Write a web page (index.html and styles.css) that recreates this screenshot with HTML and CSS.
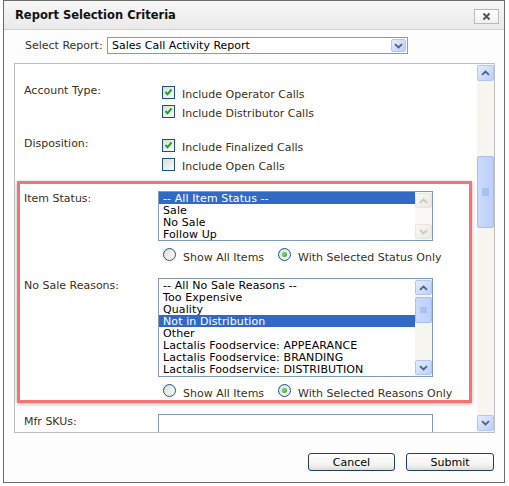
FILE: index.html
```html
<!DOCTYPE html>
<html lang="en">
<head>
    <meta charset="UTF-8">
    <title>Report Selection Criteria</title>
    <link rel="stylesheet" href="styles.css">
</head>
<body>
    <div class="dialog">
        <div class="dialog-header">
            <span class="dialog-title">Report Selection Criteria</span>
            <button class="close-btn" type="button">
                <svg width="9" height="9" viewBox="0 0 9 9"><path d="M1.5 1.5 L7.5 7.5 M7.5 1.5 L1.5 7.5" stroke="#555" stroke-width="2"/></svg>
            </button>
        </div>

        <div class="dialog-body">
            <div class="report-row">
                <label class="report-label">Select Report:</label>
                <div class="select">
                    <span>Sales Call Activity Report</span>
                    <span class="select-arrow">
                        <svg width="9" height="6" viewBox="0 0 9 6"><path d="M1 1.2 L4.5 4.5 L8 1.2" fill="none" stroke="#4d6185" stroke-width="1.8"/></svg>
                    </span>
                </div>
            </div>

            <div class="panel">
                <div class="panel-content">
                    <div class="field">
                        <div class="field-label">Account Type:</div>
                        <div class="checks">
                            <div class="check-row">
                                <span class="checkbox"><svg width="11" height="11" viewBox="0 0 11 11"><path d="M2.5 5 L4.5 7.3 L8.5 2.5" fill="none" stroke="#21a121" stroke-width="2"/></svg></span>
                                <span class="check-text">Include Operator Calls</span>
                            </div>
                            <div class="check-row">
                                <span class="checkbox"><svg width="11" height="11" viewBox="0 0 11 11"><path d="M2.5 5 L4.5 7.3 L8.5 2.5" fill="none" stroke="#21a121" stroke-width="2"/></svg></span>
                                <span class="check-text">Include Distributor Calls</span>
                            </div>
                        </div>
                    </div>

                    <div class="field field-gap">
                        <div class="field-label">Disposition:</div>
                        <div class="checks">
                            <div class="check-row">
                                <span class="checkbox"><svg width="11" height="11" viewBox="0 0 11 11"><path d="M2.5 5 L4.5 7.3 L8.5 2.5" fill="none" stroke="#21a121" stroke-width="2"/></svg></span>
                                <span class="check-text">Include Finalized Calls</span>
                            </div>
                            <div class="check-row">
                                <span class="checkbox"></span>
                                <span class="check-text">Include Open Calls</span>
                            </div>
                        </div>
                    </div>

                    <div class="highlight">
                        <div class="field">
                            <div class="field-label list-label">Item Status:</div>
                            <div>
                                <div class="listbox listbox-short">
                                    <div class="listbox-items">
                                        <div class="option selected">-- All Item Status --</div>
                                        <div class="option">Sale</div>
                                        <div class="option">No Sale</div>
                                        <div class="option">Follow Up</div>
                                    </div>
                                    <div class="lb-scroll disabled">
                                        <div class="sb-btn"><svg width="9" height="6" viewBox="0 0 9 6"><path d="M1 4.8 L4.5 1.5 L8 4.8" fill="none" stroke="#cac8bb" stroke-width="1.8"/></svg></div>
                                        <div class="sb-track"></div>
                                        <div class="sb-btn"><svg width="9" height="6" viewBox="0 0 9 6"><path d="M1 1.2 L4.5 4.5 L8 1.2" fill="none" stroke="#cac8bb" stroke-width="1.8"/></svg></div>
                                    </div>
                                </div>
                                <div class="radio-row">
                                    <span class="radio"></span>
                                    <span class="radio-text">Show All Items</span>
                                    <span class="radio checked radio-second"><span class="dot"></span></span>
                                    <span class="radio-text">With Selected Status Only</span>
                                </div>
                            </div>
                        </div>

                        <div class="field field-list-gap">
                            <div class="field-label list-label">No Sale Reasons:</div>
                            <div>
                                <div class="listbox listbox-tall">
                                    <div class="listbox-items">
                                        <div class="option">-- All No Sale Reasons --</div>
                                        <div class="option">Too Expensive</div>
                                        <div class="option">Quality</div>
                                        <div class="option selected">Not in Distribution</div>
                                        <div class="option">Other</div>
                                        <div class="option">Lactalis Foodservice: APPEARANCE</div>
                                        <div class="option">Lactalis Foodservice: BRANDING</div>
                                        <div class="option">Lactalis Foodservice: DISTRIBUTION</div>
                                    </div>
                                    <div class="lb-scroll">
                                        <div class="sb-btn"><svg width="9" height="6" viewBox="0 0 9 6"><path d="M1 4.8 L4.5 1.5 L8 4.8" fill="none" stroke="#4d6185" stroke-width="1.8"/></svg></div>
                                        <div class="sb-track"><div class="sb-thumb lb-thumb"><svg width="7" height="7" viewBox="0 0 7 7"><path d="M0 1h7M0 3h7M0 5h7" stroke="#8eaae8" stroke-width="1"/></svg></div></div>
                                        <div class="sb-btn"><svg width="9" height="6" viewBox="0 0 9 6"><path d="M1 1.2 L4.5 4.5 L8 1.2" fill="none" stroke="#4d6185" stroke-width="1.8"/></svg></div>
                                    </div>
                                </div>
                                <div class="radio-row">
                                    <span class="radio"></span>
                                    <span class="radio-text">Show All Items</span>
                                    <span class="radio checked radio-second"><span class="dot"></span></span>
                                    <span class="radio-text">With Selected Reasons Only</span>
                                </div>
                            </div>
                        </div>
                    </div>

                    <div class="field field-sku">
                        <div class="field-label sku-label">Mfr SKUs:</div>
                        <div class="text-input"></div>
                    </div>
                </div>

                <div class="vscroll">
                    <div class="sb-btn"><svg width="9" height="6" viewBox="0 0 9 6"><path d="M1 4.8 L4.5 1.5 L8 4.8" fill="none" stroke="#4d6185" stroke-width="1.8"/></svg></div>
                    <div class="sb-track"><div class="sb-thumb main-thumb"><svg width="7" height="8" viewBox="0 0 7 8"><path d="M0 1h7M0 3h7M0 5h7M0 7h7" stroke="#8eaae8" stroke-width="1"/></svg></div></div>
                    <div class="sb-btn"><svg width="9" height="6" viewBox="0 0 9 6"><path d="M1 1.2 L4.5 4.5 L8 1.2" fill="none" stroke="#4d6185" stroke-width="1.8"/></svg></div>
                </div>
            </div>

            <div class="dialog-footer">
                <button class="btn" type="button">Cancel</button>
                <button class="btn btn-submit" type="button">Submit</button>
            </div>
        </div>
    </div>
</body>
</html>
```

FILE: styles.css
```css
/* base */
body {
    margin: 0;
    background-color: #fff;
    font-family: "DejaVu Sans", Verdana, sans-serif;
    font-size: 11px;
    color: #3a3020;
}

.dialog {
    width: 502px;
    margin-left: 3px;
    border: 1px solid #6b6b6b;
    box-sizing: border-box;
    background-color: #fdfdfd;
}

/* header */
.dialog-header {
    height: 28px;
    display: flex;
    align-items: center;
    justify-content: space-between;
    padding: 0 5px 0 11px;
    background: linear-gradient(#f7f7f7, #e9e9e9);
    border-bottom: 1px solid #d2d2d2;
}
.dialog-title {
    font-weight: bold;
    font-size: 11.5px;
    color: #111;
}
.close-btn {
    width: 25px;
    height: 15px;
    margin-top: 3px;
    padding: 0;
    border: 1px solid #b9b9b9;
    background: linear-gradient(#fff, #f1f1f1);
    display: flex;
    align-items: center;
    justify-content: center;
}

.dialog-body {
    padding: 7px 9px 11px 10px;
}

/* report select */
.report-row {
    display: flex;
    align-items: center;
    padding-left: 11px;
}
.report-label {
    width: 82px;
    line-height: 13px;
}
.select {
    width: 301px;
    height: 17px;
    box-sizing: border-box;
    border: 1px solid #7f9db9;
    background-color: #fff;
    color: #000;
    display: flex;
    align-items: center;
    justify-content: space-between;
    padding: 0 1px 0 4px;
}
.select-arrow {
    width: 15px;
    height: 13px;
    box-sizing: border-box;
    border: 1px solid #b3c6f2;
    border-radius: 2px;
    background: linear-gradient(135deg, #e4ecfe, #bccffb);
    display: flex;
    align-items: center;
    justify-content: center;
}

/* scrolling panel */
.panel {
    margin-top: 9px;
    height: 370px;
    box-sizing: border-box;
    border: 1px solid #bdbdbd;
    background-color: #fff;
    display: flex;
}
.panel-content {
    flex: 1;
    overflow: hidden;
    padding-top: 20px;
}

.field {
    display: grid;
    grid-template-columns: 134px 275px;
    padding-left: 9px;
}
.field-label {
    line-height: 13px;
}
.field-gap {
    margin-top: 13px;
}
.list-label {
    padding-top: 1px;
}

.checks {
    padding-top: 2px;
}
.check-row {
    display: flex;
    height: 19px;
    padding-left: 4px;
}
.checkbox {
    flex-shrink: 0;
    width: 13px;
    height: 13px;
    box-sizing: border-box;
    border: 1px solid #1c5180;
    background: linear-gradient(135deg, #dcdcd7, #fbfbf9);
    display: flex;
    align-items: center;
    justify-content: center;
}
.check-text {
    margin-left: 7px;
    padding-top: 2px;
    line-height: 13px;
    white-space: nowrap;
}

/* red highlight round the list fields */
.highlight {
    margin: 4px 5px 0 2px;
    padding: 7px 0 3px 0;
    border: 3px solid #f47474;
    box-shadow: 0 1px 4px rgba(0, 0, 0, 0.3);
}
.highlight .field {
    padding-left: 4px;
}
.field-list-gap {
    margin-top: 17px;
}

.listbox {
    width: 275px;
    box-sizing: border-box;
    border: 1px solid #7f9db9;
    background-color: #fff;
    color: #000;
    display: flex;
}
.listbox-short {
    height: 50px;
}
.listbox-tall {
    height: 99px;
}
.listbox-items {
    flex: 1;
}
.option {
    height: 12px;
    line-height: 13px;
    padding-left: 4px;
    white-space: nowrap;
    overflow: hidden;
    letter-spacing: 0.1px;
}
.option.selected {
    background-color: #316ac5;
    color: #fff;
}

/* xp scrollbars */
.lb-scroll,
.vscroll {
    flex-shrink: 0;
    width: 17px;
    display: flex;
    flex-direction: column;
    padding: 1px 0;
    box-sizing: border-box;
    background-color: #f6f5f0;
}
.sb-btn {
    height: 16px;
    box-sizing: border-box;
    border: 1px solid #b3c6f2;
    border-radius: 2px;
    background: linear-gradient(135deg, #e4ecfe, #bccffb);
    display: flex;
    align-items: center;
    justify-content: center;
}
.lb-scroll .sb-btn {
    height: 15px;
}
.sb-track {
    flex: 1;
}
.sb-thumb {
    box-sizing: border-box;
    border: 1px solid #a9bdee;
    border-radius: 2px;
    background: linear-gradient(to right, #cbdafc, #bcd0fb);
    display: flex;
    align-items: center;
    justify-content: center;
}
.lb-thumb {
    margin-top: 2px;
    height: 26px;
}
.main-thumb {
    margin-top: 75px;
    height: 72px;
}
.lb-scroll.disabled {
    background-color: #f9f8f4;
}
.lb-scroll.disabled .sb-btn {
    border-color: #e8e6dc;
    background: linear-gradient(135deg, #f8f7f2, #ebe9df);
}

/* radios */
.radio-row {
    display: flex;
    height: 13px;
    margin-top: 7px;
    padding-left: 5px;
}
.radio {
    flex-shrink: 0;
    width: 13px;
    height: 13px;
    box-sizing: border-box;
    border: 1px solid #1c5180;
    border-radius: 50%;
    background: linear-gradient(135deg, #dcdcd7, #fbfbf9);
    display: flex;
    align-items: center;
    justify-content: center;
}
.radio-second {
    margin-left: 14px;
}
.dot {
    width: 5px;
    height: 5px;
    border-radius: 50%;
    background: radial-gradient(circle at 40% 40%, #7fe07a, #1f9a1f);
}
.radio-text {
    margin-left: 7px;
    padding-top: 3px;
    line-height: 13px;
    white-space: nowrap;
}

/* sku input, cut by the panel edge */
.field-sku {
    margin-top: 11px;
}
.sku-label {
    padding-top: 1px;
}
.text-input {
    height: 22px;
    box-sizing: border-box;
    border: 1px solid #7f9db9;
    background-color: #fff;
}

/* footer */
.dialog-footer {
    display: flex;
    justify-content: flex-end;
    gap: 11px;
    margin-top: 20px;
    padding-right: 1px;
}
.btn {
    width: 87px;
    height: 18px;
    padding: 0;
    border: 1px solid #1f3f6a;
    border-radius: 3px;
    background: linear-gradient(#ffffff, #f3f2ee 70%, #dedbd2);
    font-family: "DejaVu Sans", Verdana, sans-serif;
    font-size: 11px;
    color: #000;
}
.btn-submit {
    width: 88px;
}
```
